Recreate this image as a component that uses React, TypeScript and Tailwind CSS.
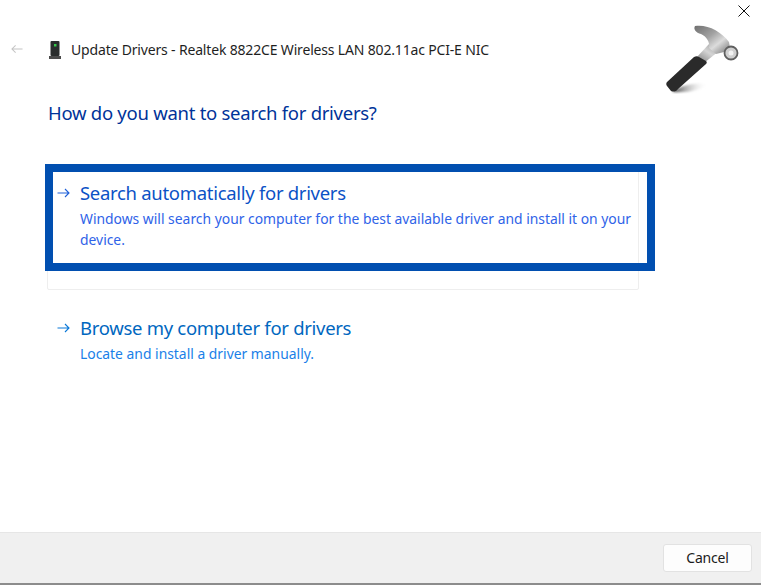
import React from "react";

const font = "font-['Noto_Sans','Open_Sans',sans-serif]";

function Arrow({ className, left }: { className: string; left?: boolean }) {
  return (
    <svg viewBox="0 0 13 10" className={className} fill="none" stroke="currentColor" strokeWidth="1.1">
      <path d={left ? "M12.5 5H1M5 1L1 5l4 4" : "M0.5 5H12M8 1l4 4-4 4"} />
    </svg>
  );
}

function Hammer() {
  return (
    <svg viewBox="0 0 80 80" className="h-[80px] w-[80px]">
      <defs>
        <linearGradient id="head" x1="0" y1="0" x2="1" y2="1">
          <stop offset="0" stopColor="#6f6f6f" />
          <stop offset="0.4" stopColor="#a2a2a2" />
          <stop offset="0.65" stopColor="#dcdcdc" />
          <stop offset="1" stopColor="#6d6d6d" />
        </linearGradient>
        <linearGradient id="neck" x1="0" y1="1" x2="1" y2="0">
          <stop offset="0" stopColor="#777" />
          <stop offset="0.5" stopColor="#d4d4d4" />
          <stop offset="1" stopColor="#8c8c8c" />
        </linearGradient>
        <linearGradient id="shadow" x1="0" y1="0" x2="1" y2="0">
          <stop offset="0" stopColor="#444" />
          <stop offset="1" stopColor="#fff" stopOpacity="0" />
        </linearGradient>
        <filter id="soft"><feGaussianBlur stdDeviation="0.6" /></filter>
        <filter id="softer"><feGaussianBlur stdDeviation="1.2" /></filter>
      </defs>
      <path d="M13 71C22 65 36 62 48 64C42 70 28 73 13 72z" fill="url(#shadow)" filter="url(#softer)" />
      <g filter="url(#soft)">
        <path d="M36 38L49 24l15 3-15 12-5 4z" fill="url(#neck)" />
        <path d="M35 6C47 4 61 11 69 22L70 28L64 32L56 34L49 28C50 22 47 17 41 14C36 13 33 9 35 6z" fill="url(#head)" />
        <circle cx="71" cy="33" r="6.5" fill="#cfcfcf" stroke="#5f5f5f" strokeWidth="1.8" />
        <circle cx="71" cy="33" r="2.5" fill="#f2f2f2" />
        <path d="M7 62L34 37c2-1 3-1 5 0l7 4c1 1 1 2 0 3L18 69c-2 3-5 3-7 2l-4-5c-1-1-1-3 0-4z" fill="#2a2a2a" />
      </g>
    </svg>
  );
}

function Option({ title, desc, titleClass, descClass, arrowClass, className }: { title: string; desc: string; titleClass: string; descClass: string; arrowClass: string; className: string }) {
  return (
    <div className={`flex ${className}`}>
      <div className="w-[33px] shrink-0 pl-[10px] pt-[8px]">
        <Arrow className={`h-[10px] w-[13px] ${arrowClass}`} />
      </div>
      <div className="min-w-0">
        <div className={`text-[18.5px] leading-[26px] tracking-[-0.3px] ${titleClass}`}>{title}</div>
        <div className={`mt-[2px] text-[13.88px] leading-[21px] ${descClass}`}>{desc}</div>
      </div>
    </div>
  );
}

export default function App() {
  return (
    <div className={`relative flex h-[585px] w-[761px] flex-col overflow-hidden bg-white ${font}`}>
      {/* Close */}
      <svg viewBox="0 0 12 12" className="absolute right-[11px] top-[5px] h-[12px] w-[12px]" fill="none" stroke="#111" strokeWidth="1">
        <path d="M0.5 0.5l11 11M11.5 0.5l-11 11" />
      </svg>
      <div className="absolute left-[660px] top-[20px]">
        <Hammer />
      </div>

      <main className="flex-1 pl-[47px]">
        <header className="relative mt-[40px] flex h-[20px] items-center">
          <Arrow left className="absolute -left-[36px] top-[4px] h-[10px] w-[12px] text-[#c4c4c4]" />
          <svg viewBox="0 0 12 18" className="ml-[2px] h-[18px] w-[12px]">
            <rect x="1.5" y="0" width="9" height="15" rx="1" fill="#2a2d2d" />
            <rect x="0" y="15" width="12" height="3" fill="#4b4b4b" />
            <rect x="5" y="3" width="2.5" height="2.5" fill="#35c84a" />
          </svg>
          <h2 className="ml-[10px] text-[14px] leading-[20px] tracking-[-0.17px] text-[#1f1f1f]">
            Update Drivers - Realtek 8822CE Wireless LAN 802.11ac PCI-E NIC
          </h2>
        </header>

        <h1 className="ml-[1px] mt-[40px] text-[18.5px] leading-[26px] tracking-[-0.27px] text-[#003399]">How do you want to search for drivers?</h1>

        <div className="relative mt-[41px] h-[123px] w-[592px] rounded-[2px] border border-[#eeeeee]">
          <Option
            className="pt-[12px] pr-[4px] -ml-[1px]"
            title="Search automatically for drivers"
            desc="Windows will search your computer for the best available driver and install it on your device."
            titleClass="text-[#0b52c6]"
            descClass="text-[#2f63e8]"
            arrowClass="text-[#1f60d8]"
          />
          {/* Highlight drawn over the option */}
          <div className="absolute -left-[3px] -top-[4px] h-[107px] w-[610px] border-[8px] border-[#014fb0]" />
        </div>

        <Option
          className="mt-[25px] pr-[4px]"
          title="Browse my computer for drivers"
          desc="Locate and install a driver manually."
          titleClass="text-[#0067c0]"
          descClass="text-[#1a7fe8]"
          arrowClass="text-[#0a78d8]"
        />
      </main>

      <footer className="flex h-[53px] shrink-0 items-center justify-end border-t border-b-2 border-[#e6e6e6] border-b-[#8c8c8c] bg-[#f0f0f0] pr-[9px]">
        <button className="h-[28px] w-[89px] rounded-[3px] border border-[#e2e2e2] bg-[#fdfdfd] text-[14px] leading-[20px] tracking-[-0.2px] text-[#1b1b1b]">
          Cancel
        </button>
      </footer>
    </div>
  );
}
